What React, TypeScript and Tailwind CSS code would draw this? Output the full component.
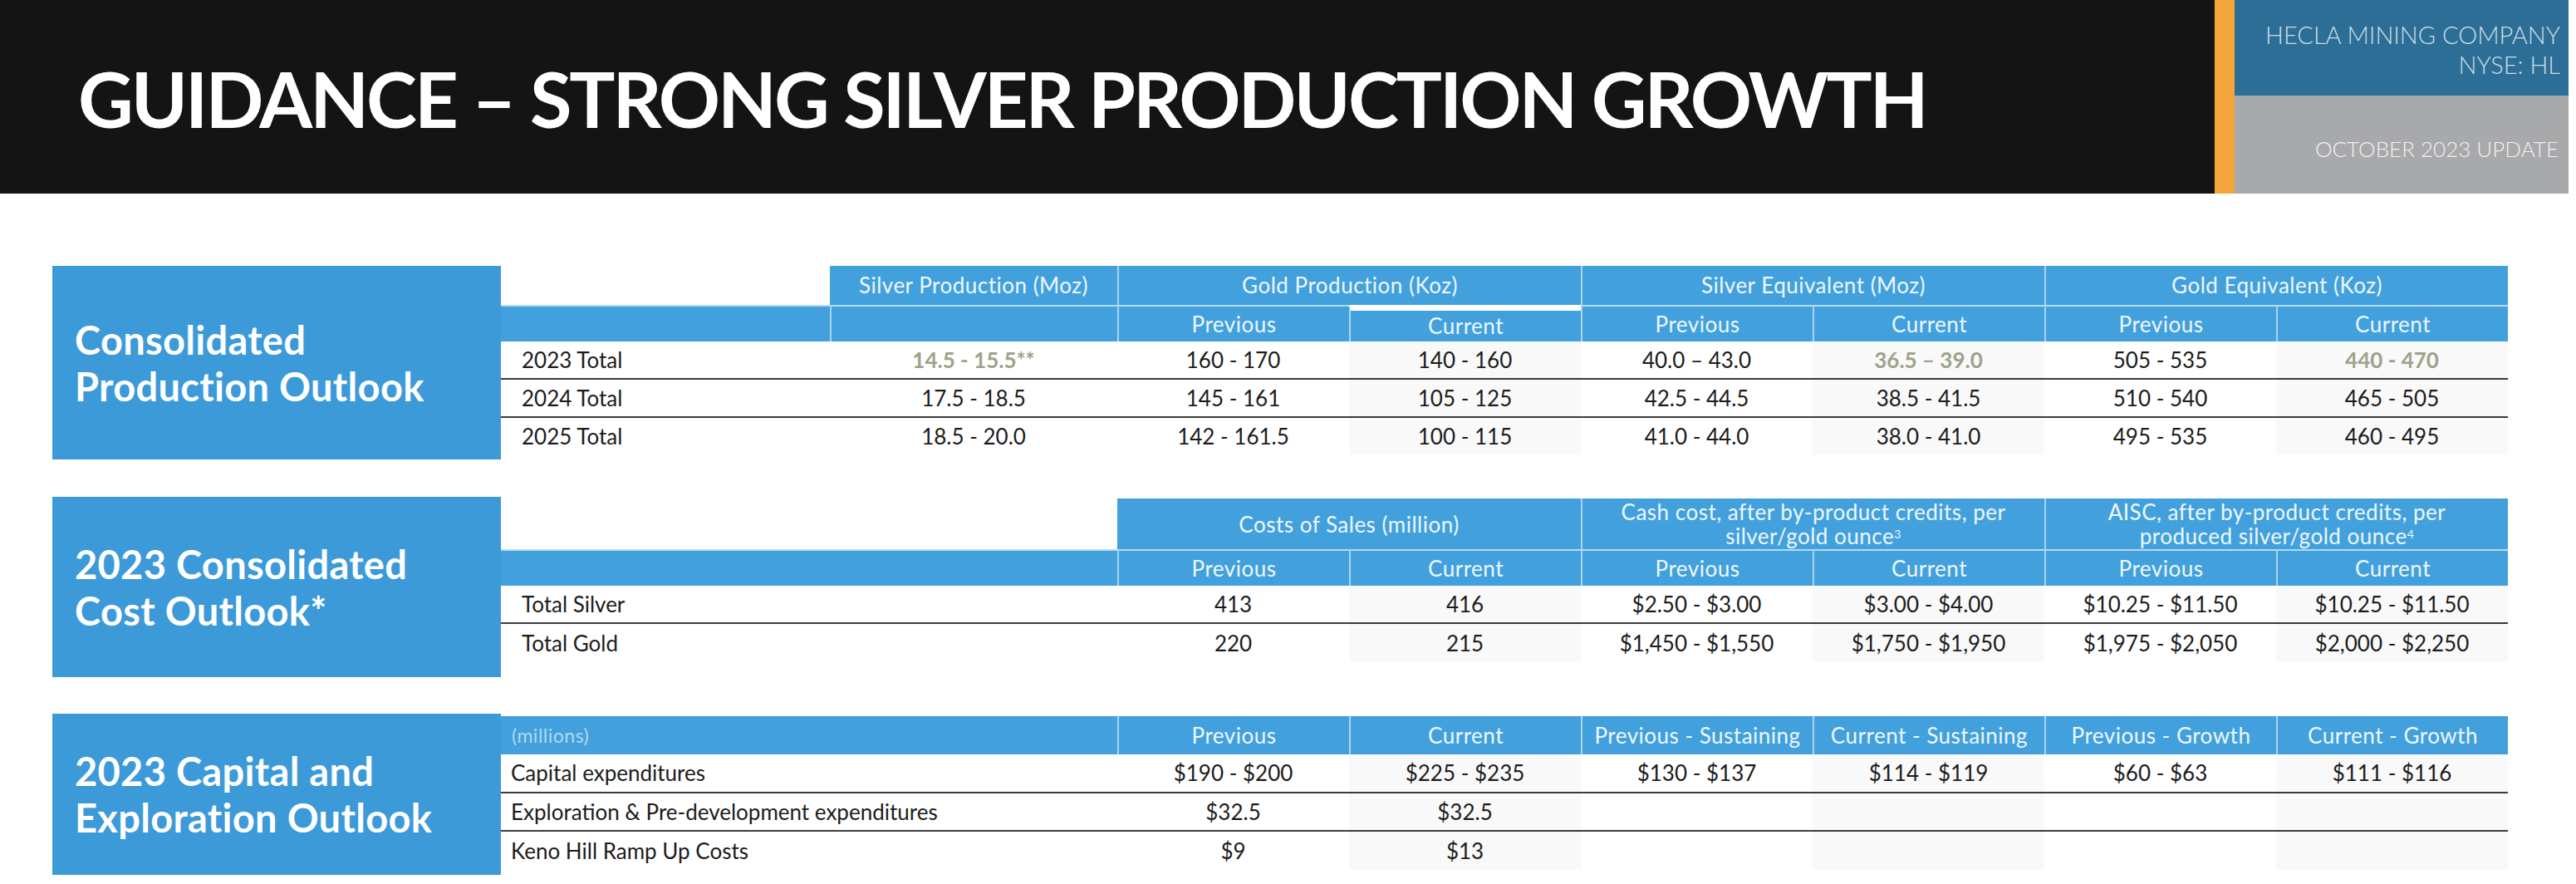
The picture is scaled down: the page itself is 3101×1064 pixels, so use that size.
import React from "react";

const hdr = "bg-[#42a1dd] text-[#eef7fd] text-[26px] tracking-[0.5px] flex items-center justify-center text-center";
const sep = "border-l-2 border-[#a6d4f1]";
const cell = "flex items-center justify-center text-[26px] text-[#1c1c1c]";

const production = [
  ["2023 Total", "14.5 - 15.5**", "160 - 170", "140 - 160", "40.0 – 43.0", "36.5 – 39.0", "505 - 535", "440 - 470"],
  ["2024 Total", "17.5 - 18.5", "145 - 161", "105 - 125", "42.5 - 44.5", "38.5 - 41.5", "510 - 540", "465 - 505"],
  ["2025 Total", "18.5 - 20.0", "142 - 161.5", "100 - 115", "41.0 - 44.0", "38.0 - 41.0", "495 - 535", "460 - 495"],
];

const costs = [
  ["Total Silver", "413", "416", "$2.50 - $3.00", "$3.00 - $4.00", "$10.25 - $11.50", "$10.25 - $11.50"],
  ["Total Gold", "220", "215", "$1,450 - $1,550", "$1,750 - $1,950", "$1,975 - $2,050", "$2,000 - $2,250"],
];

const capital = [
  ["Capital expenditures", "$190 - $200", "$225 - $235", "$130 - $137", "$114 - $119", "$60 - $63", "$111 - $116"],
  ["Exploration & Pre-development expenditures", "$32.5", "$32.5", "", "", "", ""],
  ["Keno Hill Ramp Up Costs", "$9", "$13", "", "", "", ""],
];

function Label({ lines, height }: { lines: string[]; height: string }) {
  return (
    <div className={`w-[540px] ${height} shrink-0 bg-[#3c9ad8] flex flex-col justify-center pl-[27px] text-white font-bold text-[47px] tracking-[0.3px] leading-[56px]`}>
      {lines.map((l) => (
        <span key={l}>{l}</span>
      ))}
    </div>
  );
}

function Row({
  cells,
  last,
  hi = [],
  tint,
  labelPad = "pl-[25px]",
}: {
  cells: string[];
  last: boolean;
  hi?: number[];
  tint: number[];
  labelPad?: string;
}) {
  return (
    <>
      {cells.map((c, i) => (
        <div
          key={i}
          className={`${i === 0 ? `flex items-center text-[26px] text-[#1c1c1c] ${labelPad}` : cell} ${
            tint.includes(i) ? "bg-[#f9f9f9]" : ""
          } ${hi.includes(i) ? "!text-[#9da389] font-bold" : ""} ${last ? "" : "border-b-2 border-[#3b3b3b]"}`}
        >
          {c}
        </div>
      ))}
    </>
  );
}

export default function App() {
  return (
    <div className="w-[3101px] h-[1064px] bg-white overflow-hidden font-['Lato',sans-serif]">
      <header className="flex h-[233px]">
        <div className="w-[2666px] bg-[#141414] flex items-center pl-[94px]">
          <h1 className="text-white font-bold text-[92px] tracking-[-3px] leading-none pt-[4px]">
            GUIDANCE – STRONG SILVER PRODUCTION GROWTH
          </h1>
        </div>
        <div className="w-[24px] bg-[#f4a63a]" />
        <div className="w-[402px] flex flex-col font-light">
          <div className="h-[115px] bg-[#2c6e95] flex flex-col items-end justify-center pr-[10px] pt-[4px] text-[#cddde8] text-[29px] leading-[36px]">
            <span>HECLA MINING COMPANY</span>
            <span>NYSE: HL</span>
          </div>
          <div className="flex-1 bg-[#a8a9ab] flex items-center justify-end pr-[12px] pt-[10px] text-[#f2f2f2] text-[26px]">
            OCTOBER 2023 UPDATE
          </div>
        </div>
      </header>

      <main className="pl-[63px] flex flex-col">
        <section className="flex items-start mt-[87px]">
          <Label lines={["Consolidated", "Production Outlook"]} height="h-[233px]" />
          <div className="grid grid-cols-[396px_346px_repeat(6,279px)] grid-rows-[47px_44px_46px_46px_44px]">
            <div className="bg-white" />
            <div className={hdr}>Silver Production (Moz)</div>
            <div className={`${hdr} ${sep} col-span-2`}>Gold Production (Koz)</div>
            <div className={`${hdr} ${sep} col-span-2`}>Silver Equivalent (Moz)</div>
            <div className={`${hdr} ${sep} col-span-2`}>Gold Equivalent (Koz)</div>
            <div className={`${hdr} border-t-2 border-[#b4dbf3]`} />
            <div className={`${hdr} ${sep} border-t-2 border-t-[#b4dbf3]`} />
            {["Previous", "Current", "Previous", "Current", "Previous", "Current"].map((h, i) => (
              <div
                key={i}
                className={`${hdr} ${sep} border-t-2 border-t-[#b4dbf3] ${i === 1 ? "!border-t-[7px] !border-t-white" : ""}`}
              >
                {h}
              </div>
            ))}
            {production.map((r, i) => (
              <Row
                key={i}
                cells={r}
                last={i === production.length - 1}
                hi={i === 0 ? [1, 5, 7] : []}
                tint={[3, 5, 7]}
              />
            ))}
          </div>
        </section>

        <section className="flex items-start mt-[45px]">
          <Label lines={["2023 Consolidated", "Cost Outlook*"]} height="h-[217px]" />
          <div className="grid grid-cols-[742px_repeat(6,279px)] grid-rows-[61px_44px_46px_46px] mt-[2px]">
            <div className="bg-white" />
            <div className={`${hdr} col-span-2 leading-[30px]`}>Costs of Sales (million)</div>
            <div className={`${hdr} ${sep} col-span-2 leading-[29px]`}>
              <span>
                Cash cost, after by-product credits, per
                <br />
                silver/gold ounce<sup className="text-[14px]">3</sup>
              </span>
            </div>
            <div className={`${hdr} ${sep} col-span-2 leading-[29px]`}>
              <span>
                AISC, after by-product credits, per
                <br />
                produced silver/gold ounce<sup className="text-[14px]">4</sup>
              </span>
            </div>
            <div className={`${hdr} border-t-2 border-[#b4dbf3]`} />
            {["Previous", "Current", "Previous", "Current", "Previous", "Current"].map((h, i) => (
              <div key={i} className={`${hdr} ${sep} border-t-2 border-t-[#b4dbf3]`}>
                {h}
              </div>
            ))}
            {costs.map((r, i) => (
              <Row key={i} cells={r} last={i === costs.length - 1} tint={[2, 4, 6]} />
            ))}
          </div>
        </section>

        <section className="flex items-start mt-[44px]">
          <Label lines={["2023 Capital and", "Exploration Outlook"]} height="h-[194px]" />
          <div className="grid grid-cols-[742px_repeat(6,279px)] grid-rows-[46px_47px_46px_46px] mt-[3px]">
            <div className={`${hdr} !justify-start pl-[13px] !text-[#b3d8f0] !text-[23px]`}>(millions)</div>
            {["Previous", "Current", "Previous - Sustaining", "Current - Sustaining", "Previous - Growth", "Current - Growth"].map(
              (h, i) => (
                <div key={i} className={`${hdr} ${sep}`}>
                  {h}
                </div>
              )
            )}
            {capital.map((r, i) => (
              <Row key={i} cells={r} last={i === capital.length - 1} tint={[2, 4, 6]} labelPad="pl-[12px]" />
            ))}
          </div>
        </section>
      </main>
    </div>
  );
}
